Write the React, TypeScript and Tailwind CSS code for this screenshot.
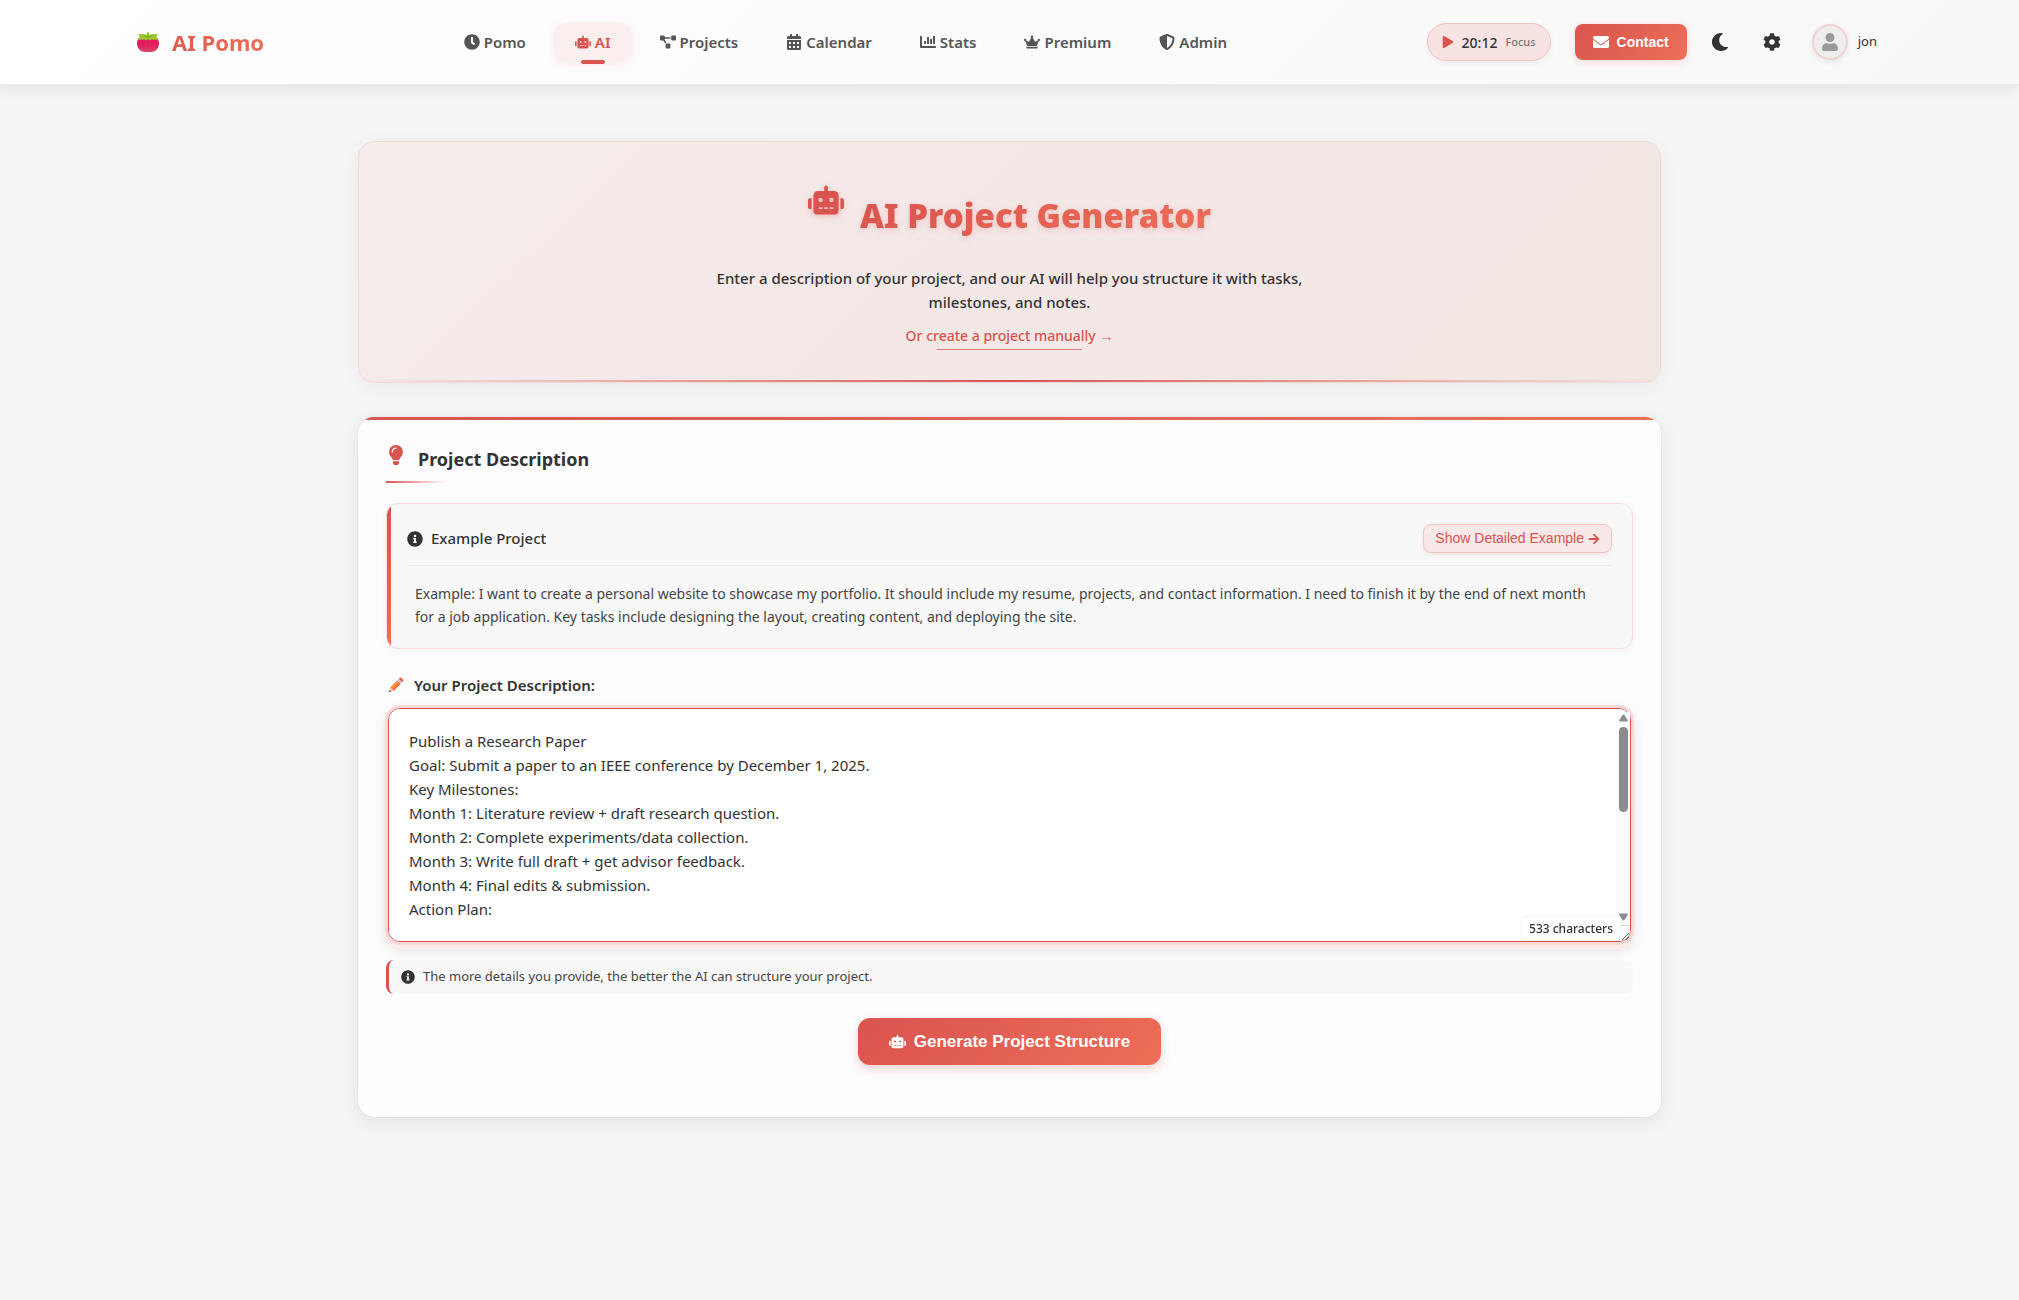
import { useState } from "react";
import {
  FaArrowRight,
  FaCalendarAlt,
  FaChartBar,
  FaClock,
  FaCog,
  FaCrown,
  FaEnvelope,
  FaInfoCircle,
  FaLightbulb,
  FaMoon,
  FaPlay,
  FaProjectDiagram,
  FaRobot,
  FaShieldAlt,
  FaUser,
} from "react-icons/fa";

const navItems = [
  { label: "Pomo", icon: FaClock },
  { label: "AI", icon: FaRobot, active: true },
  { label: "Projects", icon: FaProjectDiagram },
  { label: "Calendar", icon: FaCalendarAlt },
  { label: "Stats", icon: FaChartBar },
  { label: "Premium", icon: FaCrown },
  { label: "Admin", icon: FaShieldAlt },
];

const initialDescription = `Publish a Research Paper
Goal: Submit a paper to an IEEE conference by December 1, 2025.
Key Milestones:
Month 1: Literature review + draft research question.
Month 2: Complete experiments/data collection.
Month 3: Write full draft + get advisor feedback.
Month 4: Final edits & submission.
Action Plan:
`;

function TomatoIcon() {
  return (
    <svg className="h-5 w-6" viewBox="0 0 24 20" aria-hidden="true">
      <defs>
        <linearGradient id="tomato" x1="0" y1="0" x2="0" y2="1">
          <stop offset="0" stopColor="#e9135f" />
          <stop offset="0.6" stopColor="#e3205f" />
          <stop offset="1" stopColor="#d04a68" />
        </linearGradient>
      </defs>
      <path
        d="M12 4.500C6 3 1 5.500 1 11.500C1 16.500 5 20 9 20H15C19 20 23 16.500 23 11.500C23 5.500 18 3 12 4.500Z"
        fill="url(#tomato)"
      />
      <path
        d="M2.500 2.200C5 1.700 8.500 1.800 11 2.600V0.200H13V2.600C15.500 1.800 19 1.700 21.500 2.200L20.500 5L22 7.200Q18.500 8.300 16 7.200L14 8.600L12 7.200L10 8.600L8 7.200Q5.500 8.300 2 7.200L3.500 5Z"
        fill="#9bc830"
      />
      <path d="M7 4.200L12 3.400L17 4.200L12 6.200Z" fill="#7fb02a" />
    </svg>
  );
}

function PencilIcon() {
  return (
    <svg className="size-4" viewBox="0 0 16 16" aria-hidden="true">
      <path d="M1 15L2.300 10.300L5.700 13.700Z" fill="#f5c9a5" />
      <path d="M1 15L1.600 12.900L3.100 14.400Z" fill="#50304a" />
      <path d="M2.300 10.300L9.200 3.400L12.600 6.800L5.700 13.700Z" fill="#fb8a45" />
      <path d="M4.600 12.600L11.500 5.700L12.600 6.800L5.700 13.700Z" fill="#f4683f" />
      <path d="M9.200 3.400L10.800 1.800L14.200 5.200L12.600 6.800Z" fill="#cdc6dc" />
      <path
        d="M10.800 1.800L11.700 0.900Q12.600 0.300 13.400 0.900L15.100 2.600Q15.700 3.400 15.100 4.300L14.200 5.200Z"
        fill="#f4574f"
      />
    </svg>
  );
}

function Header() {
  return (
    <header className="relative z-10 flex h-[85px] items-center justify-between border-b border-[#ececec] bg-linear-135 from-white to-[#f8f8f8] pr-[142px] pl-34 shadow-[0_4px_12px_rgba(0,0,0,0.08)]">
      <a
        href="#"
        className="flex items-center gap-3 bg-linear-135 from-[#d9534f] to-[#ee6e57] bg-clip-text text-[22px] font-bold text-transparent"
      >
        <TomatoIcon />
        AI Pomo
      </a>
      <nav className="flex items-center gap-2">
        {navItems.map(({ label, icon: Icon, active }) => (
          <a
            key={label}
            href="#"
            aria-current={active ? "page" : undefined}
            className={
              active
                ? "relative flex h-[38px] items-center gap-1 rounded-xl bg-[#fbeeee] px-[21px] text-[15px] font-semibold text-[#d9534f] shadow-[0_2px_8px_rgba(217,83,79,0.12)]"
                : "flex h-[38px] items-center gap-1 px-5 text-[15px] font-semibold text-[#555555]"
            }
          >
            <Icon className="size-4" />
            {label}
            {active && (
              <span className="absolute -bottom-[3px] left-1/2 h-1 w-6 -translate-x-1/2 rounded-sm bg-[#d9534f]" />
            )}
          </a>
        ))}
      </nav>
      <div className="flex items-center">
        <button className="flex h-[38px] items-center rounded-full border border-[#f0c4c2] bg-[#f7e3e2] px-[14px] text-[#333333] shadow-[0_2px_6px_rgba(0,0,0,0.06)]">
          <FaPlay className="size-3 text-[#d9534f]" />
          <span className="ml-2 text-[14px] font-medium">20:12</span>
          <span className="ml-2 text-[11px] font-medium text-[#777777]">Focus</span>
        </button>
        <button className="ml-6 flex h-9 items-center gap-2 rounded-lg bg-linear-135 from-[#d9534f] to-[#ed6f58] px-[18px] font-['Liberation_Sans',sans-serif] text-[14px] font-bold text-white shadow-[0_2px_8px_rgba(217,83,79,0.2)]">
          <FaEnvelope className="size-4" />
          Contact
        </button>
        <button aria-label="Dark mode" className="ml-6 text-[#333333]">
          <FaMoon className="size-[18px]" />
        </button>
        <button aria-label="Settings" className="ml-[34px] text-[#333333]">
          <FaCog className="size-[18px]" />
        </button>
        <a href="#" className="ml-[31px] flex items-center gap-2.5 text-[13px] text-[#333333]">
          <span className="flex size-9 items-center justify-center rounded-full border-2 border-[#f0d3d2] bg-[#eeeeee] text-[#999999] shadow-[0_2px_6px_rgba(0,0,0,0.08)]">
            <FaUser className="size-[18px]" />
          </span>
          jon
        </a>
      </div>
    </header>
  );
}

function Hero() {
  return (
    <section className="relative overflow-hidden rounded-2xl border border-[#f0dad9] bg-linear-135 from-[#f5eceb] via-[#f4e8e7] to-[#f3e7e3] px-8 pt-10 pb-8 text-center shadow-[0_4px_20px_rgba(0,0,0,0.05)]">
      <h1 className="flex items-start justify-center gap-4">
        <FaRobot className="size-9 text-[#d9534f] drop-shadow-[0_2px_3px_rgba(217,83,79,0.3)]" />
        <span className="bg-linear-135 from-[#d9534f] to-[#ee6e57] bg-clip-text text-[33px] leading-[68px] font-black text-transparent drop-shadow-[0_2px_3px_rgba(217,83,79,0.25)]">
          AI Project Generator
        </span>
      </h1>
      <p className="mx-auto mt-4 max-w-[600px] text-[15px] leading-6 font-medium text-[#333333]">
        Enter a description of your project, and our AI will help you structure it with tasks,
        milestones, and notes.
      </p>
      <a
        href="#"
        className="relative mt-2 inline-block text-[14px] leading-7 font-medium text-[#d9534f]"
      >
        Or create a project manually →
        <span className="absolute bottom-0 left-[15%] h-px w-[70%] bg-[#e07b77]" />
      </a>
      <span className="absolute inset-x-0 bottom-0 h-0.5 bg-linear-to-r from-transparent via-[#d9534f] to-transparent" />
    </section>
  );
}

function Scrollbar() {
  return (
    <span
      aria-hidden="true"
      className="absolute top-1 right-[3px] bottom-4 flex w-[14px] flex-col items-center border-b border-[#dddddd] bg-[#fcfcfc] pt-0.5 pb-1"
    >
      <svg className="h-2 w-[9px] fill-[#8b8b8b]" viewBox="0 0 9 8">
        <path d="M4.500 0.500Q5.200 0.500 5.600 1.200L8.800 6.200Q9 7.500 8 7.500H1Q0 7.500 0.200 6.200L3.400 1.200Q3.800 0.500 4.500 0.500Z" />
      </svg>
      <span className="mt-[5px] h-[85px] w-[9px] rounded-full bg-[#8b8b8b]" />
      <svg className="mt-auto h-2 w-[9px] rotate-180 fill-[#8b8b8b]" viewBox="0 0 9 8">
        <path d="M4.500 0.500Q5.200 0.500 5.600 1.200L8.800 6.200Q9 7.500 8 7.500H1Q0 7.500 0.200 6.200L3.400 1.200Q3.800 0.500 4.500 0.500Z" />
      </svg>
    </span>
  );
}

function Generator() {
  const [description, setDescription] = useState(initialDescription);
  return (
    <section className="relative mt-[34px] overflow-hidden rounded-2xl bg-[#fdfdfd] px-7 pt-6 pb-[52px] shadow-[0_4px_20px_rgba(0,0,0,0.08),0_0_1px_rgba(0,0,0,0.2)]">
      <span className="absolute inset-x-0 top-0 h-[3px] bg-linear-to-r from-[#d9534f] to-[#ee6e57]" />
      <h2 className="relative flex h-[42px] items-start gap-3 text-[#333333]">
        <FaLightbulb className="mt-1 size-5 text-[#d9534f]" />
        <span className="text-[18px] leading-9 font-bold">Project Description</span>
        <span className="absolute bottom-0 left-0 h-0.5 w-15 bg-linear-to-r from-[#d9534f] to-transparent" />
      </h2>

      <div className="relative mt-5 overflow-hidden rounded-xl border border-[#f5dedd] bg-[#f8f8f8] px-5 pt-5 pb-1 shadow-[0_2px_8px_rgba(0,0,0,0.05)]">
        <span className="absolute inset-y-0 left-0 w-1 bg-linear-to-b from-[#d9534f] to-[#ee6e57]" />
        <div className="flex items-center justify-between border-b border-[#e9e9e9] pb-3">
          <h3 className="flex items-center gap-2 text-[15px] font-medium text-[#333333]">
            <FaInfoCircle className="size-4" />
            Example Project
          </h3>
          <button className="flex h-[29px] items-center gap-1 rounded-lg border border-[#f0c4c2] bg-[#f8e8e7] px-[11px] font-['Liberation_Sans',sans-serif] text-[14px] text-[#d9534f] shadow-[0_2px_4px_rgba(217,83,79,0.1)]">
            Show Detailed Example
            <FaArrowRight className="size-3" />
          </button>
        </div>
        <p className="px-2 py-4 text-[14px] leading-[23px] text-[#444444]">
          Example: I want to create a personal website to showcase my portfolio. It should include
          my resume, projects, and contact information. I need to finish it by the end of next month
          for a job application. Key tasks include designing the layout, creating content, and
          deploying the site.
        </p>
      </div>

      <label
        htmlFor="description"
        className="mt-6 flex items-center gap-2.5 pl-0.5 text-[15px] leading-6 font-semibold text-[#333333]"
      >
        <PencilIcon />
        Your Project Description:
      </label>
      <div className="relative mt-[11px] px-0.5">
        <textarea
          id="description"
          value={description}
          onChange={(event) => setDescription(event.target.value)}
          className="block h-[234px] w-full resize-y overflow-y-auto rounded-xl border border-[#d9534f] bg-white px-5 py-5 text-[15px] leading-6 text-[#333333] shadow-[0_0_0_3px_#f7d9d8,0_4px_0_3px_#fceceb,0_6px_14px_2px_rgba(0,0,0,0.12)] outline-none"
        />
        <Scrollbar />
        <span className="absolute right-3 bottom-0.5 rounded bg-white px-2 text-[12px] leading-[23px] font-medium text-[#333333] shadow-[0_0_3px_rgba(0,0,0,0.1)]">
          533 characters
        </span>
      </div>
      <p className="mt-[18px] flex h-[34px] items-center gap-2 rounded-lg border-l-3 border-[#d9534f] bg-[#f8f8f8] px-3 text-[13px] text-[#444444]">
        <FaInfoCircle className="size-3.5 text-[#333333]" />
        The more details you provide, the better the AI can structure your project.
      </p>
      <button className="mx-auto mt-6 flex h-[47px] items-center gap-2 rounded-xl bg-linear-135 from-[#d9534f] to-[#ee6e57] px-[31px] font-['Liberation_Sans',sans-serif] text-[17px] font-bold text-white shadow-[0_4px_10px_rgba(217,83,79,0.25)]">
        <FaRobot className="size-[17px]" />
        Generate Project Structure
      </button>
    </section>
  );
}

export default function App() {
  return (
    <div className="min-h-screen bg-[#f5f5f5] font-['Noto_Sans',sans-serif]">
      <Header />
      <main className="mx-auto max-w-[1303px] pt-14">
        <Hero />
        <Generator />
      </main>
    </div>
  );
}
